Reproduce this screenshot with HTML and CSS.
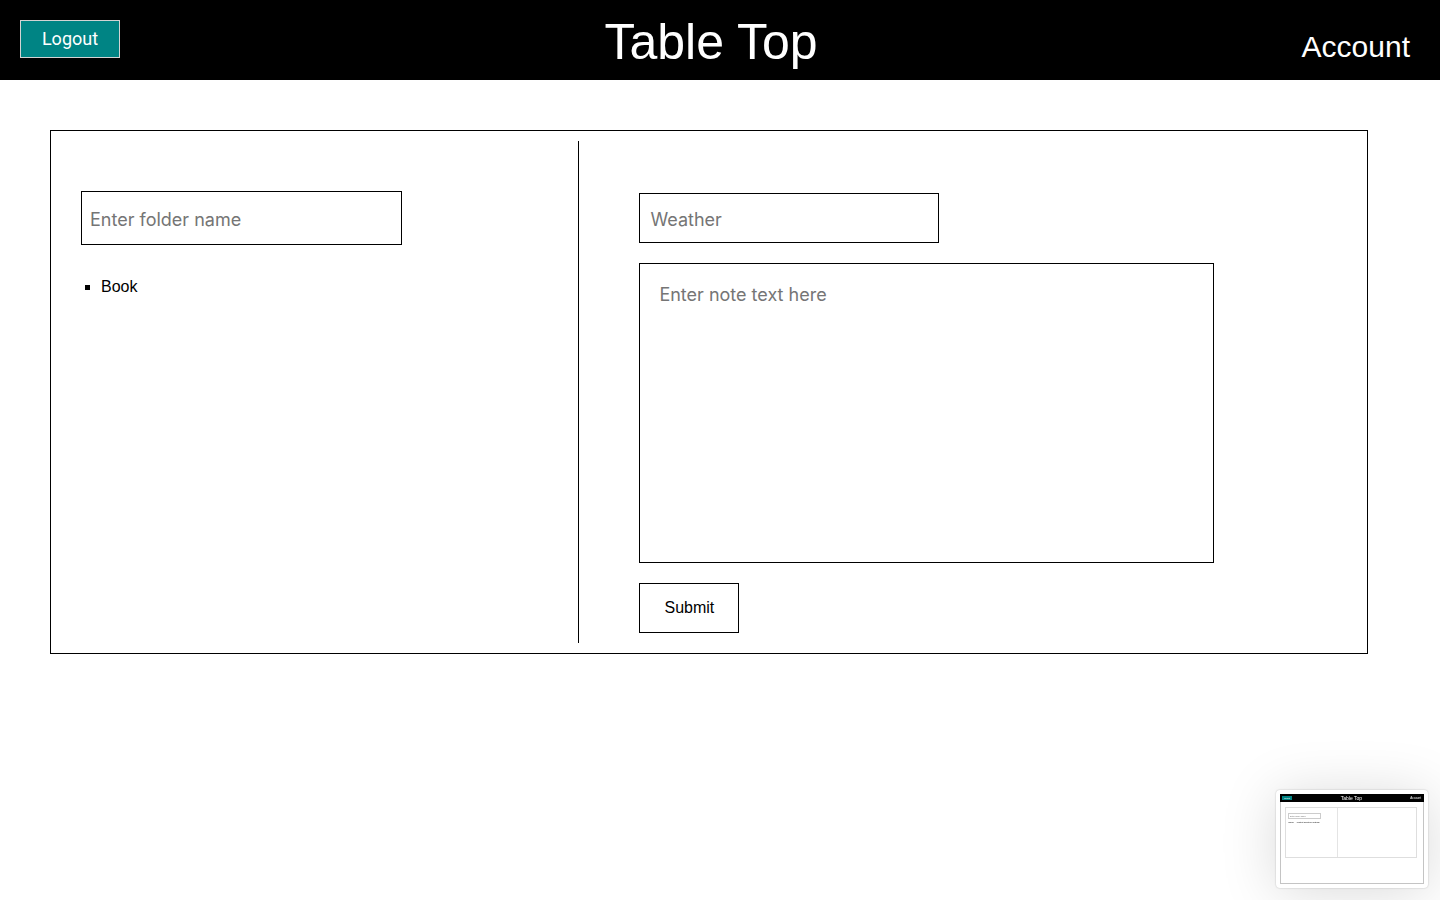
FILE: index.html
```html
<!DOCTYPE html>
<html lang="en">
<head>
<meta charset="utf-8">
<meta name="viewport" content="width=device-width, initial-scale=1">
<title>Table Top</title>
<link rel="stylesheet" href="styles.css">
</head>
<body>
<header class="header">
  <button type="button" class="logout">Logout</button>
  <h1 class="title">Table Top</h1>
  <a class="account" href="#account">Account</a>
</header>
<main class="board">
  <section class="folders">
    <input class="field folder-name" type="text" placeholder="Enter folder name" aria-label="Folder name">
    <ul class="folder-list">
      <li>Book</li>
    </ul>
  </section>
  <form class="note">
    <input class="field note-title" type="text" placeholder="Weather" aria-label="Note title">
    <textarea class="field note-text" placeholder="Enter note text here" aria-label="Note text"></textarea>
    <button type="button" class="submit">Submit</button>
  </form>
</main>
<aside class="preview">
  <div class="preview-page">
    <div class="preview-header">
      <span class="preview-logout">Logout</span>
      <span class="preview-title">Table Top</span>
      <span class="preview-account">Account</span>
    </div>
    <div class="preview-board">
      <div class="preview-left">
        <div class="preview-field">Enter folder name</div>
        <div class="preview-items"><span>▪ Book</span><span>content selected: material</span></div>
      </div>
    </div>
  </div>
</aside>
</body>
</html>
```
FILE: styles.css
```css
* {
  box-sizing: border-box;
}

body {
  margin: 0;
  min-height: 100vh;
  background: #fff;
  color: #000;
  font: 16px/20px "Liberation Sans", Arial, sans-serif;
}

.header {
  display: grid;
  grid-template-columns: 1fr auto 1fr;
  align-items: start;
  height: 80px;
  padding: 0 30px 0 20px;
  background: #000;
  color: #fff;
}

.logout {
  justify-self: start;
  width: 100px;
  height: 38px;
  margin-top: 20px;
  padding: 0;
  border: 1px solid #d3d3d3;
  background: #008484;
  color: #fff;
  font: 18px/20px Roboto, sans-serif;
}

.title {
  margin: 12px 8px 0 0;
  font-size: 50px;
  line-height: 60px;
  font-weight: 400;
}

.account {
  justify-self: end;
  margin-top: 29px;
  color: #fff;
  font-size: 30px;
  line-height: 36px;
  text-decoration: none;
}

.board {
  box-sizing: content-box;
  display: flex;
  width: 90%;
  margin: 50px 0 0 50px;
  padding: 10px;
  border: 1px solid #000;
}

.folders {
  width: 40%;
  padding: 50px 20px 0;
  border-right: 1px solid #000;
}

.field {
  display: block;
  border: 1px solid #000;
  border-radius: 0;
  outline: 0;
  background: #fff;
  font: 18px/24px Inter, sans-serif;
}

.field::placeholder {
  color: #757575;
}

.folder-name {
  width: 321px;
  height: 54px;
  padding: 2px 8px 0;
}

.folder-list {
  margin: 32px 0 0;
  padding-left: 20px;
  list-style: square;
}

.note {
  flex: 1;
  padding: 52px 0 10px 60px;
}

.note-title {
  width: 300px;
  height: 50px;
  padding: 2px 10px 0;
}

.note-text {
  width: calc(80% + 1px);
  height: 300px;
  margin-top: 20px;
  padding: 19px;
  resize: none;
}

.submit {
  display: block;
  width: 100px;
  height: 50px;
  margin-top: 20px;
  padding: 0;
  border: 1px solid #000;
  background: #fff;
  color: #000;
  font: 16px/20px "Liberation Sans", Arial, sans-serif;
}

.preview {
  position: fixed;
  right: 12px;
  bottom: 12px;
  width: 152px;
  padding: 4px;
  border-radius: 4px;
  background: #fff;
  box-shadow: 0 0 2px rgba(0, 0, 0, 0.25), 0 4px 56px rgba(0, 0, 0, 0.15);
}

.preview-page {
  height: 90px;
  border: 1px solid #c4c4c4;
  border-top: 0;
  font-size: 2px;
  line-height: 3px;
}

.preview-header {
  display: grid;
  grid-template-columns: 1fr auto 1fr;
  align-items: center;
  height: 8px;
  margin: 0 -1px;
  padding: 0 3px 0 2px;
  background: #000;
  color: #fff;
}

.preview-logout {
  justify-self: start;
  width: 10px;
  height: 4px;
  background: #008484;
  line-height: 4px;
  text-align: center;
}

.preview-title {
  font-size: 5px;
  line-height: 6px;
}

.preview-account {
  justify-self: end;
  font-size: 3px;
}

.preview-board {
  display: flex;
  width: 132px;
  height: 51px;
  margin: 5px 0 0 4px;
  border: 1px solid #dedede;
}

.preview-left {
  width: 52px;
  padding: 5px 0 0 2px;
  border-right: 1px solid #e4e4e4;
}

.preview-field {
  width: 33px;
  height: 6px;
  padding-left: 1px;
  border: 1px solid #ccc;
  color: #757575;
  line-height: 4px;
}

.preview-items {
  display: flex;
  gap: 3px;
  margin-top: 2px;
  white-space: nowrap;
}
```
